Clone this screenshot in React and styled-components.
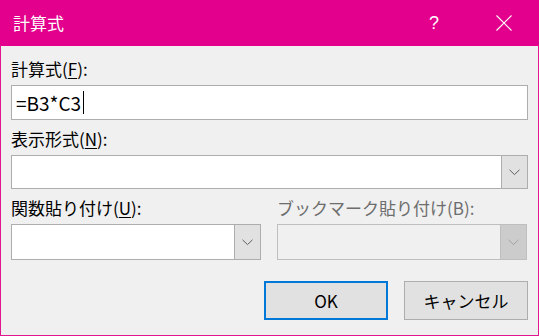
import React from 'react';
import styled, { createGlobalStyle } from 'styled-components';

const Global = createGlobalStyle`
  html, body { margin: 0; padding: 0; background: #f0f0f0; }
  body { font-family: "Noto Sans CJK JP", "Noto Sans", sans-serif; }
`;

const Window = styled.div`
  box-sizing: border-box;
  width: 539px;
  height: 336px;
  border: 1px solid #e1178f;
  border-top: none;
  background: #f0f0f0;
  display: flex;
  flex-direction: column;
`;

const TitleBar = styled.div`
  height: 46px;
  margin: 0 -1px;
  background: #e3008c;
  color: #fff;
  display: flex;
  align-items: center;
  padding: 0 0 0 13px;
  font-size: 17px;
`;

const Title = styled.div`
  flex: 1;
  margin-top: -1px;
`;

const TitleButton = styled.div`
  width: 70px;
  height: 46px;
  display: flex;
  align-items: center;
  justify-content: center;
  font-size: 18px;
  font-family: "Liberation Sans", sans-serif;
`;

const Body = styled.div`
  flex: 1;
  padding: 12px 10px 0 10px;
  display: flex;
  flex-direction: column;
`;

const Label = styled.div`
  font-size: 17px;
  line-height: 22px;
  height: 22px;
  color: ${(p) => (p.disabled ? '#6d6d6d' : '#000')};
  margin-bottom: 5px;
  white-space: nowrap;
  u { text-decoration: underline; text-underline-offset: 2px; }
`;

const TextBox = styled.div`
  box-sizing: border-box;
  height: 35px;
  border: 1px solid #adadad;
  background: #fff;
  display: flex;
  align-items: center;
  padding-left: 4px;
  font-size: 19px;
  color: #000;
  margin-bottom: 8px;
`;

const Caret = styled.span`
  display: inline-block;
  width: 1px;
  height: 23px;
  background: #000;
  margin-left: 2px;
`;

const Select = styled.div`
  box-sizing: border-box;
  height: ${(p) => p.h || 35}px;
  border: 1px solid ${(p) => (p.disabled ? '#bfbfbf' : '#adadad')};
  background: ${(p) => (p.disabled ? '#f0f0f0' : '#fff')};
  display: flex;
  justify-content: flex-end;
  margin-bottom: ${(p) => p.mb || 0}px;
`;

const DropButton = styled.div`
  width: 25px;
  background: ${(p) => (p.disabled ? '#cccccc' : '#e1e1e1')};
  border-left: 1px solid ${(p) => (p.disabled ? '#bfbfbf' : '#adadad')};
  display: flex;
  align-items: center;
  justify-content: center;
  color: ${(p) => (p.disabled ? '#a0a0a0' : '#606060')};
`;

const Row = styled.div`
  display: grid;
  grid-template-columns: 250px 250px;
  column-gap: 16px;
`;

const Column = styled.div`
  display: flex;
  flex-direction: column;
`;

const Buttons = styled.div`
  display: flex;
  justify-content: flex-end;
  gap: 16px;
  margin-top: 21px;
`;

const Button = styled.div`
  box-sizing: border-box;
  width: 124px;
  height: 39px;
  background: #e1e1e1;
  border: ${(p) => (p.primary ? '2px solid #0078d7' : '1px solid #adadad')};
  display: flex;
  align-items: center;
  justify-content: center;
  font-size: 17px;
  color: #000;
`;

const Chevron = () => (
  <svg width="11" height="7" viewBox="0 0 11 7">
    <path d="M0.5 0.8 L5.5 5.6 L10.5 0.8" fill="none" stroke="currentColor" strokeWidth="1" />
  </svg>
);

const Close = () => (
  <svg width="16" height="16" viewBox="0 0 16 16">
    <path d="M0.5 0.5 L15.5 15.5 M15.5 0.5 L0.5 15.5" stroke="#fff" strokeWidth="1.1" />
  </svg>
);

export default function App() {
  return (
    <Window>
      <Global />
      <TitleBar>
        <Title>計算式</Title>
        <TitleButton>?</TitleButton>
        <TitleButton>
          <Close />
        </TitleButton>
      </TitleBar>
      <Body>
        <Label>計算式(<u>F</u>):</Label>
        <TextBox>
          =B3*C3
          <Caret />
        </TextBox>
        <Label>表示形式(<u>N</u>):</Label>
        <Select h={34} mb={8}>
          <DropButton>
            <Chevron />
          </DropButton>
        </Select>
        <Row>
          <Column>
            <Label>関数貼り付け(<u>U</u>):</Label>
            <Select h={36}>
              <DropButton>
                <Chevron />
              </DropButton>
            </Select>
          </Column>
          <Column>
            <Label disabled>ブックマーク貼り付け(B):</Label>
            <Select h={36} disabled>
              <DropButton disabled>
                <Chevron />
              </DropButton>
            </Select>
          </Column>
        </Row>
        <Buttons>
          <Button primary>OK</Button>
          <Button>キャンセル</Button>
        </Buttons>
      </Body>
    </Window>
  );
}
